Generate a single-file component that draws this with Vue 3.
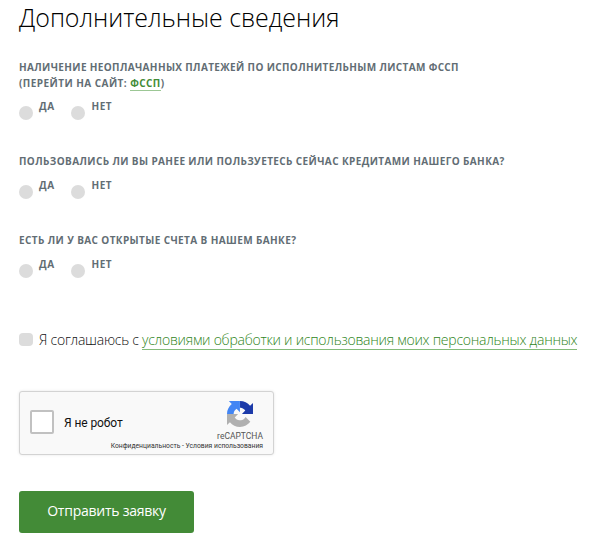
<script setup>
const questions = [
  { id: 'debt', text: 'Наличение неоплачанных платежей по исполнительным листам ФССП', site: true },
  { id: 'credit', text: 'Пользовались ли вы ранее или пользуетесь сейчас кредитами нашего банка?' },
  { id: 'account', text: 'Есть ли у вас открытые счета в нашем банке?' },
]
</script>

<template>
  <form class="page" @submit.prevent>
    <h1 class="title">Дополнительные сведения</h1>

    <div v-for="q in questions" :key="q.id" class="question">
      <div class="label" :class="q.id">{{ q.text }}</div>
      <div v-if="q.site" class="label site">(Перейти на сайт: <a class="link">ФССП</a>)</div>
      <div class="options" :class="{ spaced: !q.site }">
        <label class="option yes"><span class="dot"></span><span class="answer">Да</span></label>
        <label class="option"><span class="dot"></span><span class="answer">Нет</span></label>
      </div>
    </div>

    <label class="consent">
      <span class="check"></span>
      <span class="consent-text">Я соглашаюсь с</span>
      <a class="terms">условиями обработки и использования моих персональных данных</a>
    </label>

    <div class="captcha">
      <div class="box"></div>
      <div class="robot">Я не робот</div>
      <div class="brand">
        <svg class="logo" viewBox="0 0 64 64">
          <path fill="#1c3aa9" d="M64 31.955a33.3 33.3 0 0 0-.033-1.37V4.687l-7.16 7.16C50.948 4.674 42.033.093 32.05.093v16.25c.485 0 .86.057 1.135.163 4.976.393 9.288 3.14 11.828 7.124l-8.307 8.307L64 31.953" />
          <path fill="#4285f4" d="M31.862.094a33.3 33.3 0 0 0-1.37.033H4.594l7.16 7.16C4.58 13.147 0 22.06 0 32.046h16.26c0-.485.057-.86.163-1.135.393-4.976 3.14-9.288 7.124-11.828l8.307 8.307L31.86.095" />
          <path fill="#b0b0b0" d="M.001 32.045a33.3 33.3 0 0 0 .033 1.37v25.898l7.16-7.16c5.86 7.173 14.774 11.754 24.76 11.754 10.4 0 19.622-4.96 25.458-12.64l-11.736-11.86a15.55 15.55 0 0 1-4.754 5.334c-2.05 1.6-4.952 2.906-8.968 2.906-.485 0-.86-.057-1.135-.163-4.976-.393-9.288-3.14-11.828-7.124l8.307-8.307L.001 32.045" />
        </svg>
        <div class="brand-name">reCAPTCHA</div>
        <div class="legal">Конфиденциальность - Условия использования</div>
      </div>
    </div>

    <button class="submit">Отправить заявку</button>
  </form>
</template>

<style>
body {
  margin: 0;
  background: #fff;
}
</style>

<style scoped>
.page {
  box-sizing: border-box;
  width: 600px;
  height: 548px;
  padding: 0 0 0 19px;
  overflow: hidden;
  font-family: 'Open Sans', 'Noto Sans', sans-serif;
  white-space: nowrap;
}
.title {
  margin: 0 0 25px;
  font-size: 25px;
  line-height: 34px;
  font-weight: 300;
  letter-spacing: -0.05px;
  color: #000;
}
.question {
  margin-bottom: 31px;
}
.label,
.answer {
  font-size: 10px;
  line-height: 16px;
  font-weight: 700;
  letter-spacing: 0.39px;
  text-transform: uppercase;
  color: #626d74;
}
.label.debt {
  letter-spacing: 0.36px;
}
.label.site {
  height: 16px;
  letter-spacing: 0.45px;
}
.answer {
  letter-spacing: 0.6px;
}
.link {
  display: inline-block;
  line-height: 13px;
  color: #438b37;
  border-bottom: 1px solid #9cc795;
}
.options {
  display: flex;
  padding-top: 7px;
  height: 24px;
}
.options.spaced {
  padding-top: 8px;
}
.option {
  display: flex;
}
.yes {
  width: 52.4px;
}
.dot {
  width: 14px;
  height: 14px;
  margin: 8px 6px 0 0;
  border-radius: 50%;
  background: #dcdcdc;
}
.consent {
  display: flex;
  margin-top: 50px;
  height: 24px;
  font-size: 14px;
  line-height: 20px;
  font-weight: 300;
  letter-spacing: -0.25px;
  color: #111;
}
.check {
  width: 14px;
  height: 13px;
  margin: 3px 6px 0 0;
  border-radius: 4px;
  background: #dcdcdc;
}
.consent-text {
  width: 103px;
}
.terms {
  height: 19px;
  color: #2f8522;
  border-bottom: 1px solid #83bb79;
}
.captcha {
  box-sizing: border-box;
  display: flex;
  width: 255px;
  height: 64px;
  margin-top: 37px;
  padding: 0 10px;
  border: 1px solid #d3d3d3;
  border-radius: 3px;
  background: #f9f9f9;
  box-shadow: 0 0 3px rgba(0, 0, 0, 0.1);
  font-family: Roboto, sans-serif;
}
.box {
  box-sizing: border-box;
  flex: none;
  width: 24px;
  height: 24px;
  margin: 18px 10px 0 0;
  border: 2px solid #c1c1c1;
  border-radius: 2px;
  background: #fff;
}
.robot {
  flex: none;
  width: 46px;
  padding-top: 21px;
  font-size: 12px;
  line-height: 20px;
  letter-spacing: -0.1px;
  color: #111;
}
.brand {
  display: flex;
  flex: 1;
  flex-direction: column;
  align-items: flex-end;
  min-width: 0;
  padding-top: 9px;
}
.logo {
  width: 26px;
  height: 26px;
  margin-right: 10px;
}
.brand-name {
  margin-top: 3px;
  font-size: 8.5px;
  line-height: 12px;
  color: #555;
}
.legal {
  font-size: 6.75px;
  line-height: 8px;
  color: #333;
}
.submit {
  display: block;
  width: 175px;
  height: 42px;
  margin-top: 36px;
  padding: 0 0 2px;
  border: 0;
  border-radius: 3px;
  background: #438b37;
  color: #fff;
  font: 400 14px/40px 'Open Sans', sans-serif;
  letter-spacing: -0.25px;
}
</style>
